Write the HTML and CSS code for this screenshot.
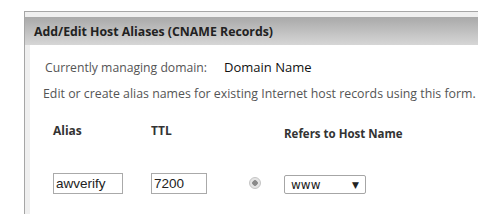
FILE: index.html
```html
<!DOCTYPE html>
<html lang="en">

<head>
    <meta charset="UTF-8">
    <meta name="viewport" content="width=device-width, initial-scale=1.0">
    <title>Add/Edit Host Aliases</title>
    <link rel="stylesheet" href="styles.css">
</head>

<body>
    <div class="panel">
        <div class="panel-head">Add/Edit Host Aliases (CNAME Records)</div>
        <div class="panel-body">
            <p class="domain-line">
                <span class="label">Currently managing domain:</span>
                <span class="domain">Domain Name</span>
            </p>
            <p class="hint">Edit or create alias names for existing Internet host records using this form.</p>
            <div class="alias-form">
                <div class="col-head">Alias</div>
                <div class="col-head">TTL</div>
                <div></div>
                <div class="col-head small">Refers to Host Name</div>

                <input class="field field-alias" type="text" value="awverify">
                <input class="field field-ttl" type="text" value="7200">
                <span class="radio"></span>
                <div class="select">www<span class="caret">&#9660;</span></div>
            </div>
        </div>
    </div>
</body>

</html>
```

FILE: styles.css
```css
body {
    margin: 0;
    background-color: #fff;
    font-family: "Open Sans", "Liberation Sans", sans-serif;
}

.panel {
    margin: 11px 0 0 24px;
    padding-top: 5px;
    border-top: 1px solid #a6a6a6;
    border-left: 1px solid #a6a6a6;
    background-color: #efefef;
}

.panel-head {
    height: 28px;
    line-height: 30px;
    padding-left: 9px;
    font-size: 12.3px;
    font-weight: bold;
    color: #222;
    background: linear-gradient(#a9a9a9, #d6d6d6);
}

.panel-body {
    margin-left: 5px;
    padding: 13px 0 20px 15px;
    background-color: #fff;
}

.domain-line {
    display: flex;
    align-items: baseline;
    margin: 0;
    font-size: 12.2px;
    color: #555;
}

.domain-line .domain {
    margin-left: 17px;
    font-size: 13px;
    color: #111;
}

.hint {
    margin: 9px 0 0 -2px;
    font-size: 12.35px;
    color: #555;
    white-space: nowrap;
}

/* 四列：别名 / TTL / 单选 / 主机名 */
.alias-form {
    display: grid;
    grid-template-columns: 98px 98px 35px auto;
    align-items: center;
    margin: 16px 0 0 8px;
}

.col-head {
    height: 22px;
    font-size: 12px;
    font-weight: bold;
    color: #333;
}

.col-head.small {
    padding-top: 8px;
    font-size: 11.5px;
}

.field {
    box-sizing: border-box;
    height: 21px;
    margin-top: 25px;
    padding: 0 2px;
    border: 1px solid #aaa;
    font-family: "Liberation Sans", Arial, sans-serif;
    font-size: 13.5px;
    color: #222;
    outline: none;
}

.field-alias {
    width: 70px;
}

.field-ttl {
    width: 56px;
}

.radio {
    box-sizing: border-box;
    width: 12px;
    height: 12px;
    margin: 23px 0 0 0;
    border: 1px solid #c4c4c4;
    border-radius: 50%;
    background: radial-gradient(#8a8a8a 0, #8a8a8a 2.5px, #e4e4e4 3px);
}

.select {
    display: flex;
    align-items: center;
    justify-content: space-between;
    box-sizing: border-box;
    width: 82px;
    height: 19px;
    margin-top: 27px;
    padding: 0 6px 0 6px;
    border: 1px solid #a6a6a6;
    border-radius: 2px;
    font-family: "DejaVu Sans", sans-serif;
    font-size: 12px;
    color: #222;
}

.select .caret {
    font-size: 9px;
}
```
